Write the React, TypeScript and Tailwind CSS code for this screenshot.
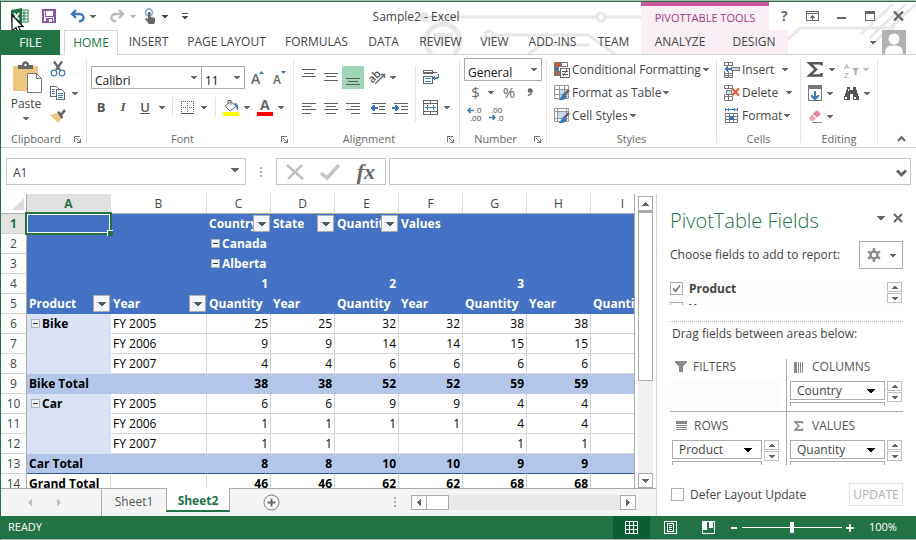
import React from "react";

type Kids = { children?: React.ReactNode };

function Svg({ w, h, children, className = "", smooth = false }: Kids & { w: number; h: number; className?: string; smooth?: boolean }) {
  return (
    <svg
      width={w}
      height={h}
      viewBox={`0 0 ${w} ${h}`}
      className={`shrink-0 overflow-visible ${className}`}
      fill="none"
      shapeRendering={smooth ? "auto" : "crispEdges"}
      aria-hidden="true"
    >
      {children}
    </svg>
  );
}

function Caret({ className = "text-[#666666]" }: { className?: string }) {
  return (
    <Svg w={6} h={3} className={className}>
      <path d="M0 0h6v1h-1v1h-1v1h-2v-1h-1v-1h-1z" fill="currentColor" />
    </Svg>
  );
}

function BigCaret({ className = "text-[#666666]" }: { className?: string }) {
  return (
    <Svg w={8} h={4} className={className}>
      <path d="M0 0h8v1h-1v1h-1v1h-1v1h-2v-1h-1v-1h-1v-1h-1z" fill="currentColor" />
    </Svg>
  );
}

function Lines({ rows, stroke = "#5f5f5f" }: { rows: [number, number, number][]; stroke?: string }) {
  return (
    <>
      {rows.map(([x, y, w]) => (
        <rect key={`${x}-${y}`} x={x} y={y} width={w} height={1} fill={stroke} />
      ))}
    </>
  );
}

function IconButton({ label, className = "", children }: Kids & { label: string; className?: string }) {
  return (
    <button type="button" aria-label={label} title={label} className={`flex shrink-0 items-center justify-center ${className}`}>
      {children}
    </button>
  );
}

function Launcher({ label }: { label: string }) {
  return (
    <IconButton label={label} className="h-4 w-3">
      <Svg w={7} h={7}>
        <path d="M0 0h6v1h-5v5h-1z" fill="#777" />
        <path d="M2 2h1v1h1v1h1v1h1v-2h1v4h-4v-1h2v-1h-1v-1h-1v-1h-1z" fill="#777" />
      </Svg>
    </IconButton>
  );
}

function Group({ name, width, launcher = false, children }: Kids & { name: string; width: string; launcher?: boolean }) {
  return (
    <section aria-label={name} className={`flex shrink-0 ${width}`}>
      <div className="flex min-w-0 flex-1 flex-col">
        <div className="h-[76px]">{children}</div>
        <div className={`flex h-4 items-center ${launcher ? "pr-[3px]" : ""}`}>
          <span className="flex-1 text-center text-[11px] leading-4 text-[#666666]">{name}</span>
          {launcher && <Launcher label={`${name} settings`} />}
        </div>
      </div>
      <div className="my-1 w-px bg-[#e1e1e1]" />
    </section>
  );
}

/* ---------- title bar ---------- */

function Circuit() {
  return (
    <Svg w={516} h={52} smooth className="pointer-events-none absolute right-0 top-0">
      <g stroke="#e8e8e8" strokeWidth={3}>
        <path d="M28 15H197M205 15H250L262 22V52" />
        <circle cx={201} cy={15} r={4} />
        <path d="M32 52A17 17 0 1 1 54 52" strokeWidth={5} />
        <circle cx={89} cy={33} r={4} />
        <path d="M93 33H188L215 52M128 52L142 43H190" />
        <path d="M241 15L268 52M258 45H282" />
        <path d="M373 52L400 26H495" />
        <path d="M452 52L506 2M462 52L516 2M440 52L493 2" />
      </g>
      <path d="M33 31h20v6h-5v6h-10v-6h-5z" fill="#e8e8e8" />
      <circle cx={24} cy={15} r={5} fill="#e8e8e8" />
      <rect x={395} y={32} width={74} height={20} fill="#fff" />
    </Svg>
  );
}

function ExcelLogo() {
  return (
    <Svg w={18} h={16} smooth>
      <rect x={9} y={2} width={8} height={12} fill="#fff" stroke="#217346" />
      <path d="M10 5h6M10 8h6M10 11h6M13 3v10" stroke="#217346" />
      <path d="M0 2L11 0V16L0 14z" fill="#217346" />
      <path d="M3 5L8 11.500M8 5L3 11.500" stroke="#fff" strokeWidth={1.800} />
    </Svg>
  );
}

function Cursor() {
  return (
    <Svg w={13} h={20} smooth className="pointer-events-none absolute left-[10px] top-[12px]">
      <path d="M1 1V17L5 13.500L7.500 19L10 18L7.500 12.500H12z" fill="#fff" stroke="#111" strokeWidth={1.200} />
    </Svg>
  );
}

function TitleBar() {
  return (
    <div className="relative flex h-7 items-stretch">
      <div className="flex w-[190px] shrink-0 items-center pl-[10px]">
        <ExcelLogo />
        <IconButton label="Save" className="ml-3 w-[15px]">
          <Svg w={14} h={14}>
            <path d="M1 1h12v12H1z" stroke="#8b55a5" strokeWidth={2} />
            <path d="M3 1h8v6H3zM4 9h6v4H4z" fill="#fff" stroke="#8b55a5" />
            <path d="M5 10h2v3H5z" fill="#8b55a5" />
          </Svg>
        </IconButton>
        <IconButton label="Undo" className="ml-[14px]">
          <Svg w={15} h={14} smooth>
            <path d="M6 1L2 5L6 9M2 5H9C15 5 15 12 9 12.500" stroke="#3f78b8" strokeWidth={2.400} />
          </Svg>
        </IconButton>
        <IconButton label="Undo list" className="ml-[5px]"><Caret /></IconButton>
        <IconButton label="Redo" className="ml-[14px]">
          <Svg w={15} h={14} smooth>
            <path d="M9 1L13 5L9 9M13 5H6C0 5 0 12 6 12.500" stroke="#b8b8b8" strokeWidth={2.400} />
          </Svg>
        </IconButton>
        <IconButton label="Redo list" className="ml-[5px]"><Caret className="text-[#c0c0c0]" /></IconButton>
        <IconButton label="Touch mode" className="ml-[8px]">
          <Svg w={12} h={16} smooth>
            <circle cx={5} cy={4.500} r={3.500} stroke="#8fb2d8" strokeWidth={1.800} />
            <path d="M4 4h2.500v5L11 10V14L10 16H5L1 11L2 10L4 11z" fill="#666" />
          </Svg>
        </IconButton>
        <IconButton label="Touch mode list" className="ml-[6px]"><Caret className="text-[#444444]" /></IconButton>
        <IconButton label="Customize toolbar" className="ml-[14px]">
          <Svg w={6} h={6}>
            <path d="M0 0h6v1H0zM0 3h6v1h-1v1h-1v1h-2v-1h-1v-1h-1z" fill="#555" />
          </Svg>
        </IconButton>
      </div>
      <h1 className="flex flex-1 items-center justify-center pt-px text-[12px] text-[#444444]">Sample2 - Excel</h1>
      <div className="flex w-32 shrink-0 items-center justify-center border-t-4 border-[#c9579b] bg-[#fbeff6] text-[11px] text-[#a23d80]">
        PIVOTTABLE TOOLS
      </div>
      <div className="flex w-[147px] shrink-0 items-center justify-between pl-3 pr-3">
        <IconButton label="Help"><span className="text-[14px] font-bold leading-4 text-[#666666]">?</span></IconButton>
        <IconButton label="Ribbon display options">
          <Svg w={13} h={10}>
            <path d="M0.500 0.500h12v9h-12zM0 2.500h13M6.500 4v5M4 6.500h5M5 5.500h3" stroke="#666" />
          </Svg>
        </IconButton>
        <IconButton label="Minimize"><Svg w={9} h={10}><rect y={6} width={9} height={2} fill="#666" /></Svg></IconButton>
        <IconButton label="Maximize">
          <Svg w={10} h={10}><path d="M0.500 0.500h9v9h-9z" stroke="#666" /><rect width={10} height={3} fill="#666" /></Svg>
        </IconButton>
        <IconButton label="Close">
          <Svg w={11} h={10} smooth><path d="M1 0.500L10 9.500M10 0.500L1 9.500" stroke="#666" strokeWidth={2.400} /></Svg>
        </IconButton>
      </div>
      <Cursor />
    </div>
  );
}

const TABS: [string, string][] = [
  ["INSERT", "w-[60px]"],
  ["PAGE LAYOUT", "w-[96px]"],
  ["FORMULAS", "w-[84px]"],
  ["DATA", "w-[50px]"],
  ["REVIEW", "w-16"],
  ["VIEW", "w-11"],
  ["ADD-INS", "w-[72px]"],
  ["TEAM", "w-[50px]"],
];

function RibbonTabs() {
  return (
    <nav className="relative flex h-[25px] border-b border-[#d4d4d4] text-[12px] text-[#444444]">
      <button type="button" className="h-[25px] w-[59px] shrink-0 bg-[#217346] text-white">FILE</button>
      <button type="button" className="ml-1 h-[25px] w-[54px] shrink-0 border border-b-0 border-[#d4d4d4] bg-white text-[#217346]">HOME</button>
      {TABS.map(([t, w]) => (
        <button key={t} type="button" className={`shrink-0 whitespace-nowrap pl-px ${w}`}>{t}</button>
      ))}
      <div className="flex-1" />
      <div className="flex shrink-0 bg-[#fbeff6]">
        <button type="button" className="w-[78px]">ANALYZE</button>
        <button type="button" className="w-[69px] pl-px">DESIGN</button>
      </div>
      <div className="flex w-[128px] shrink-0 items-center justify-end gap-[6px] pr-[10px]">
        <IconButton label="Account list"><Caret /></IconButton>
        <IconButton label="Account">
          <Svg w={24} h={24} smooth>
            <rect width={24} height={24} fill="#b2b2b2" />
            <circle cx={12} cy={9} r={5.500} fill="#fff" />
            <path d="M3 24C3 16 8 15.500 12 15.500S21 16 21 24z" fill="#fff" />
          </Svg>
        </IconButton>
      </div>
    </nav>
  );
}

/* ---------- ribbon ---------- */

function Combo({ label, value, className }: { label: string; value: string; className: string }) {
  return (
    <div className={`relative border border-[#ababab] bg-white ${className}`}>
      <select aria-label={label} defaultValue={value} className="h-full w-full appearance-none bg-transparent pb-1 pl-[3px] text-[12px] leading-4 text-[#111111] outline-none">
        <option>{value}</option>
      </select>
      <div className="pointer-events-none absolute inset-y-0 right-1 flex items-center"><Caret /></div>
    </div>
  );
}

function ClipboardGroup() {
  return (
    <Group name="Clipboard" width="w-[86px]" launcher>
      <div className="flex pt-[6px]">
        <button type="button" className="ml-[5px] flex w-10 flex-col items-center text-[12px] leading-4 text-[#444444]">
          <Svg w={30} h={32} smooth className="ml-1">
            <rect x={0} y={5} width={25} height={25} rx={1} fill="#ecc57f" />
            <path d="M5 4h4c0-5 7-5 7 0h4v4H5z" fill="#666" />
            <circle cx={12.500} cy={4} r={1.200} fill="#fff" />
            <path d="M14.500 12.500h9l5 5v14h-14z" fill="#fff" stroke="#777" />
            <path d="M23.500 12.500v5h5" stroke="#777" />
          </Svg>
          <span className="mb-[5px] mt-[3px]">Paste</span>
          <Caret />
        </button>
        <div className="ml-1 flex flex-col items-start gap-[9px]">
          <IconButton label="Cut">
            <Svg w={16} h={16} smooth>
              <path d="M4 0.500L10 9M12 0.500L6 9" stroke="#666" strokeWidth={2.200} />
              <circle cx={4} cy={12} r={2.800} stroke="#3f78b8" strokeWidth={1.200} />
              <circle cx={12} cy={12} r={2.800} stroke="#3f78b8" strokeWidth={1.200} />
            </Svg>
          </IconButton>
          <div className="flex items-center gap-[6px]">
            <IconButton label="Copy">
              <Svg w={16} h={14}>
                <path d="M0.500 0.500h6l3 3v7h-9z" fill="#fff" stroke="#666" />
                <path d="M6.500 3.500h5l3 3v7h-8z" fill="#fff" stroke="#666" />
                <path d="M2 3.500h3M2 5.500h3M2 7.500h3M8 7.500h5M8 9.500h5M8 11.500h5" stroke="#3f78b8" />
              </Svg>
            </IconButton>
            <Caret />
          </div>
          <IconButton label="Format painter">
            <Svg w={16} h={14} smooth>
              <path d="M0 6L7 4L12 9L8 14z" fill="#ecc57f" />
              <path d="M7 3L9 2L11 4L14 0L16 2L12.500 6L13 9L11 9.500z" fill="#666" />
            </Svg>
          </IconButton>
        </div>
      </div>
    </Group>
  );
}

function VRule({ className = "h-5" }: { className?: string }) {
  return <div className={`w-px shrink-0 bg-[#e1e1e1] ${className}`} />;
}

function FontGroup() {
  return (
    <Group name="Font" width="w-[207px]" launcher>
      <div className="flex items-center pl-1 pt-[11px]">
        <Combo label="Font name" value="Calibri" className="h-[23px] w-[111px]" />
        <Combo label="Font size" value="11" className="-ml-px h-[23px] w-11" />
        <IconButton label="Grow font" className="ml-[6px]">
          <Svg w={14} h={14} smooth>
            <text x={0} y={13} fontSize={14} fontWeight={600} fill="#666">A</text>
            <path d="M8 3L10.500 0L13 3z" fill="#3f78b8" />
          </Svg>
        </IconButton>
        <IconButton label="Shrink font" className="ml-[8px]">
          <Svg w={14} h={14} smooth>
            <text x={0} y={13} fontSize={12} fontWeight={600} fill="#666">A</text>
            <path d="M8 0H13L10.500 3z" fill="#3f78b8" />
          </Svg>
        </IconButton>
      </div>
      <div className="mt-[7px] flex h-[22px] items-center pl-[3px] text-[13px] leading-5 text-[#555555]">
        <button type="button" aria-label="Bold" className="w-[22px] text-center font-bold">B</button>
        <button type="button" aria-label="Italic" className="w-[22px] text-center font-['Liberation_Serif',serif] font-bold italic">I</button>
        <button type="button" aria-label="Underline" className="w-[22px] text-center font-semibold underline">U</button>
        <IconButton label="Underline list" className="ml-[3px]"><Caret /></IconButton>
        <VRule className="ml-[7px] h-5" />
        <IconButton label="Borders" className="ml-2">
          <Svg w={13} h={13}>
            <path d="M0.500 0v12M6.500 0v12M12.500 0v12M0 0.500h13M0 6.500h13" stroke="#666" strokeDasharray="1 1" />
            <path d="M0 12.500h13" stroke="#555" />
          </Svg>
        </IconButton>
        <IconButton label="Borders list" className="ml-[7px]"><Caret /></IconButton>
        <VRule className="ml-2 h-5" />
        <IconButton label="Fill colour" className="ml-[7px]">
          <Svg w={16} h={17} smooth>
            <path d="M2 7L8 2.500L13 7.500L7 12z" fill="#fff" stroke="#666" />
            <path d="M5 5V1.500H8V6" stroke="#666" />
            <path d="M11 4C15 4 16 7 14.500 12L13 8z" fill="#3f78b8" />
            <rect y={13} width={16} height={4} fill="#ffff00" />
          </Svg>
        </IconButton>
        <IconButton label="Fill colour list" className="ml-[5px]"><Caret /></IconButton>
        <IconButton label="Font colour" className="ml-[7px]">
          <Svg w={16} h={17} smooth>
            <text x={3} y={11} fontSize={14} fontWeight={700} fill="#666">A</text>
            <rect y={13} width={16} height={4} fill="#ff0000" />
          </Svg>
        </IconButton>
        <IconButton label="Font colour list" className="ml-[5px]"><Caret /></IconButton>
      </div>
    </Group>
  );
}

function AlignmentGroup() {
  return (
    <Group name="Alignment" width="w-[166px]" launcher>
      <div className="flex pt-[11px]">
        <div className="flex w-[121px] flex-col gap-2 pl-1">
          <div className="flex h-[23px] items-center">
            <IconButton label="Top align" className="h-[23px] w-[22px]">
              <Svg w={14} h={23}><Lines rows={[[0, 3, 14], [2, 7, 10], [0, 10, 14]]} /></Svg>
            </IconButton>
            <IconButton label="Middle align" className="h-[23px] w-[22px]">
              <Svg w={14} h={23}><Lines rows={[[0, 7, 14], [2, 10, 10], [0, 14, 14]]} /></Svg>
            </IconButton>
            <IconButton label="Bottom align" className="h-[23px] w-[22px] bg-[#9fd5b7]">
              <Svg w={14} h={23}><Lines rows={[[0, 12, 14], [2, 15, 10], [0, 18, 14]]} /></Svg>
            </IconButton>
            <IconButton label="Orientation" className="ml-[5px]">
              <Svg w={17} h={17} smooth>
                <text x={0} y={11} fontSize={11} fontWeight={600} fill="#555" transform="rotate(-45 6 9)">ab</text>
                <path d="M6 15L15 6M12 5.500H15.500V9" stroke="#666" strokeWidth={1.300} />
              </Svg>
            </IconButton>
            <IconButton label="Orientation list" className="ml-1"><Caret /></IconButton>
          </div>
          <div className="flex h-[22px] items-center">
            <IconButton label="Align left" className="w-[22px]">
              <Svg w={14} h={11}><Lines rows={[[0, 0, 14], [0, 3, 9], [0, 6, 14], [0, 10, 9]]} /></Svg>
            </IconButton>
            <IconButton label="Center" className="w-[22px]">
              <Svg w={14} h={11}><Lines rows={[[0, 0, 14], [2, 3, 10], [0, 6, 14], [2, 10, 10]]} /></Svg>
            </IconButton>
            <IconButton label="Align right" className="w-[22px]">
              <Svg w={14} h={11}><Lines rows={[[0, 0, 14], [5, 3, 9], [0, 6, 14], [5, 10, 9]]} /></Svg>
            </IconButton>
            <IconButton label="Decrease indent" className="ml-[6px]">
              <Svg w={16} h={11}>
                <Lines rows={[[2, 0, 14], [9, 3, 6], [9, 6, 6], [2, 10, 14]]} />
                <path d="M0 5h1v-1h1v-1h1v-1h2v2h3v2h-3v2h-2v-1h-1v-1h-1v-1h-1z" fill="#3f78b8" />
              </Svg>
            </IconButton>
            <IconButton label="Increase indent" className="ml-[6px]">
              <Svg w={16} h={11}>
                <Lines rows={[[2, 0, 14], [9, 3, 7], [9, 6, 7], [2, 10, 14]]} />
                <path d="M8 5h-1v-1h-1v-1h-1v-1h-2v2h-3v2h3v2h2v-1h1v-1h1v-1h1z" fill="#3f78b8" />
              </Svg>
            </IconButton>
          </div>
        </div>
        <VRule className="h-14" />
        <div className="flex flex-col gap-[15px] pl-[7px] pt-[3px]">
          <IconButton label="Wrap text" className="w-4">
            <Svg w={16} h={16}>
              <path d="M0.500 1.500h9v3h-9zM0.500 7.500h9v7h-9z" stroke="#666" />
              <path d="M0 3.500h14" stroke="#666" />
              <path d="M2 9.500h6M2 12.500h6" stroke="#3f78b8" />
              <path d="M15 5v3h-2v1h-1v-2h-1v1h-1v2h1v1h1v-1h3v-1h1v-4z" fill="#3f78b8" />
            </Svg>
          </IconButton>
          <div className="flex items-center gap-[6px]">
            <IconButton label="Merge and center">
              <Svg w={15} h={15}>
                <path d="M0.500 0.500h14v14h-14zM0 3.500h15M0 11.500h15M7.500 0v4M7.500 11v4" stroke="#666" />
                <path d="M2 7.500h11M4.500 5v5M10.500 5v5" stroke="#3f78b8" />
              </Svg>
            </IconButton>
            <Caret />
          </div>
        </div>
      </div>
    </Group>
  );
}

function NumberGroup() {
  return (
    <Group name="Number" width="w-[87px]" launcher>
      <div className="pl-1 pt-[3px]">
        <Combo label="Number format" value="General" className="h-[23px] w-[78px]" />
        <div className="mt-px flex h-5 items-center text-[15px] text-[#666666]">
          <button type="button" aria-label="Currency" className="ml-[6px] w-[11px] leading-5">$</button>
          <IconButton label="Currency list" className="ml-[7px]"><Caret /></IconButton>
          <button type="button" aria-label="Percent" className="ml-[7px] w-4 leading-5">%</button>
          <IconButton label="Comma style" className="ml-[10px]">
            <Svg w={6} h={8} smooth>
              <circle cx={3} cy={2.500} r={2.300} fill="#666" />
              <path d="M5 2C5.500 5 4 7 1 7.500" stroke="#666" strokeWidth={1.300} />
            </Svg>
          </IconButton>
        </div>
        <div className="flex gap-[6px] pl-[3px] pt-1">
          <IconButton label="Increase decimal">
            <Svg w={16} h={16} smooth>
              <text x={8} y={7} fontSize={8} fill="#444">.0</text>
              <text x={3} y={15} fontSize={8} fill="#444">.00</text>
              <path d="M7 4.500H1M3.500 2L1 4.500L3.500 7" stroke="#3f78b8" strokeWidth={1.500} />
            </Svg>
          </IconButton>
          <IconButton label="Decrease decimal">
            <Svg w={16} h={16} smooth>
              <text x={2} y={7} fontSize={8} fill="#444">.00</text>
              <text x={8} y={15} fontSize={8} fill="#444">.0</text>
              <path d="M0 11.500H6M3.500 9L6 11.500L3.500 14" stroke="#3f78b8" strokeWidth={1.500} />
            </Svg>
          </IconButton>
        </div>
      </div>
    </Group>
  );
}

function RibbonItem({ icon, text, wide = "gap-[2px]" }: { icon: React.ReactNode; text: string; wide?: string }) {
  return (
    <button type="button" className={`flex h-[23px] items-center whitespace-nowrap text-[12px] text-[#444444] ${wide}`}>
      {icon}
      <span>{text}</span>
      <Caret />
    </button>
  );
}

function TableBrush() {
  return (
    <>
      <path d="M15 5L10 10" stroke="#666" strokeWidth={2.500} />
      <path d="M10 8.500L13 11.500C12 15 8 15.500 4 15C7 14 7 10 10 8.500z" fill="#3f78b8" />
    </>
  );
}

function StylesGroup() {
  return (
    <Group name="Styles" width="w-[170px]">
      <div className="flex flex-col pl-[7px] pt-[3px]">
        <RibbonItem
          text="Conditional Formatting"
          icon={
            <Svg w={16} h={16}>
              <path d="M0 0h7v4H0zM0 10h4v4H0z" fill="#d9532c" />
              <path d="M0 5h5v4H0z" fill="#3f78b8" />
              <path d="M0.500 0.500h13v4h-13zM0.500 9.500h5v4h-5zM7.500 0v4M4.500 5v9M0.500 0v14" stroke="#777" />
              <path d="M6.500 6.500h9v9h-9z" fill="#fff" stroke="#666" />
              <path d="M8 9.500h6M8 12.500h6M12.500 7.500l-3 7" stroke="#555" />
            </Svg>
          }
        />
        <RibbonItem
          text="Format as Table"
          icon={
            <Svg w={16} h={16} smooth>
              <rect x={5} y={5} width={10} height={9} fill="#c7dbef" />
              <path d="M0.500 0.500h14v13h-14zM0 4.500h15M0 9.500h15M5.500 0v14M10.500 0v14" stroke="#999" />
              <TableBrush />
            </Svg>
          }
        />
        <RibbonItem
          text="Cell Styles"
          icon={
            <Svg w={16} h={16} smooth>
              <rect x={4} y={4} width={8} height={6} fill="#c7dbef" />
              <path d="M0.500 0.500h14v13h-14zM0 3.500h15M3.500 0v14M12.500 0v14M0 10.500h15" stroke="#999" />
              <TableBrush />
            </Svg>
          }
        />
      </div>
    </Group>
  );
}

function CellsGroup() {
  return (
    <Group name="Cells" width="w-[84px]">
      <div className="flex flex-col items-start pl-[7px] pt-[3px]">
        <RibbonItem
          text="Insert"
          wide="gap-[2px] [&>svg:last-child]:ml-[6px]"
          icon={
            <Svg w={16} h={16}>
              <path d="M0.500 0.500h8v3h-8zM4.500 0v4M0.500 11.500h8v4h-8zM4.500 9v7M0.500 9v4h8v-4" stroke="#777" />
              <path d="M7.500 5.500h8v3h-8z" fill="#c7dbef" stroke="#777" />
              <path d="M0 7h1v-1h1v-1h1v-1h1v2h3v2H4v2H3v-1H2V8H1V7z" fill="#3f78b8" />
            </Svg>
          }
        />
        <RibbonItem
          text="Delete"
          wide="gap-[2px] [&>svg:last-child]:ml-[6px]"
          icon={
            <Svg w={16} h={16} smooth>
              <path d="M0.500 0.500h8v3h-8zM4.500 0v4M0.500 11.500h8v4h-8zM4.500 9v7M0.500 9v4" stroke="#777" />
              <path d="M2.500 5.500h5v4h-5z" fill="#c7dbef" stroke="#777" />
              <path d="M8 3.500L15 10.500M15 3.500L8 10.500" stroke="#d9532c" strokeWidth={1.800} />
            </Svg>
          }
        />
        <RibbonItem
          text="Format"
          icon={
            <Svg w={16} h={16}>
              <path d="M1.500 0v3M13.500 0v3M2 1.500h11M4.500 0v3M10.500 0v3" stroke="#3f78b8" />
              <path d="M1.500 5.500h12v9h-12zM1 8.500h13M1 11.500h13M5.500 5v10M9.500 5v10" stroke="#777" />
              <rect x={5} y={8} width={5} height={4} fill="#3f78b8" />
            </Svg>
          }
        />
      </div>
    </Group>
  );
}

function EditingGroup() {
  return (
    <Group name="Editing" width="w-[77px]">
      <div className="flex flex-col gap-2 pl-[7px] pt-[7px]">
        <div className="flex h-[15px] items-center">
          <IconButton label="AutoSum">
            <Svg w={15} h={15} smooth>
              <path d="M13.500 3.500V1.200H1.500L8 7.500L1.500 13.500H13.500V11" stroke="#555" strokeWidth={2.500} />
            </Svg>
          </IconButton>
          <IconButton label="AutoSum list" className="ml-[6px]"><Caret /></IconButton>
          <IconButton label="Sort and filter" className="ml-[9px]">
            <Svg w={16} h={16} smooth>
              <text x={0} y={7} fontSize={8} fill="#999">A</text>
              <text x={0} y={16} fontSize={8} fill="#999">Z</text>
              <path d="M8 6h7l-2.500 3v4h-2v-4z" fill="#b0b0b0" />
            </Svg>
          </IconButton>
          <IconButton label="Sort list" className="ml-[3px]"><Caret className="text-[#c0c0c0]" /></IconButton>
        </div>
        <div className="flex h-4 items-center">
          <IconButton label="Fill">
            <Svg w={14} h={16}>
              <path d="M0.500 0.500h13v15h-13z" stroke="#777" />
              <rect width={14} height={4} fill="#777" />
              <path d="M6 6h2v5h1v-1h2v2h-1v1h-1v1h-1v1h-2v-1h-1v-1h-1v-1h-1v-2h2v1h1z" fill="#3f78b8" />
            </Svg>
          </IconButton>
          <IconButton label="Fill list" className="ml-[5px]"><Caret /></IconButton>
          <IconButton label="Find" className="ml-[11px]">
            <Svg w={15} h={13}>
              <path d="M3 0h3v3h3V0h3v3h1v3h1v3h1v4H9V7H6v6H0V9h1V6h1V3h1z" fill="#555" />
              <path d="M1 10h2v2H1zM10 10h2v2h-2zM4 2h1v2H4z" fill="#fff" />
            </Svg>
          </IconButton>
          <IconButton label="Find list" className="ml-[5px]"><Caret /></IconButton>
        </div>
        <div className="flex h-[14px] items-center">
          <IconButton label="Clear">
            <Svg w={14} h={13} smooth>
              <path d="M9 0L13 4L9 7.500L4.500 4z" fill="#e78a9c" />
              <path d="M4 4.500L8 8.500L5 11H3L1 8z" fill="#ef9fae" />
              <path d="M4 12.500H14" stroke="#888" />
            </Svg>
          </IconButton>
          <IconButton label="Clear list" className="ml-[5px]"><Caret /></IconButton>
        </div>
      </div>
    </Group>
  );
}

function Ribbon() {
  return (
    <div className="flex h-[93px] shrink-0 border-b border-[#d4d4d4]">
      <ClipboardGroup />
      <FontGroup />
      <AlignmentGroup />
      <NumberGroup />
      <StylesGroup />
      <CellsGroup />
      <EditingGroup />
      <div className="flex flex-1 items-end justify-end pb-1 pr-[10px]">
        <IconButton label="Collapse ribbon">
          <Svg w={9} h={9} smooth><path d="M1 7L4.500 3L8 7" stroke="#666" strokeWidth={2} /></Svg>
        </IconButton>
      </div>
    </div>
  );
}

function FormulaBar() {
  return (
    <div className="mb-[9px] mt-[10px] flex h-[27px] shrink-0 pl-[5px]">
      <div className="relative w-60 border border-[#c6c6c6]">
        <input aria-label="Name box" defaultValue="A1" className="h-full w-full pb-[2px] pl-[6px] text-[12px] text-[#444444] outline-none" />
        <div className="pointer-events-none absolute inset-y-0 right-[6px] flex items-center pb-[3px]"><BigCaret /></div>
      </div>
      <div className="flex w-[30px] items-center justify-center">
        <Svg w={2} h={12}><path d="M0 1h2v2H0zM0 5h2v2H0zM0 9h2v2H0z" fill="#b0b0b0" /></Svg>
      </div>
      <div className="flex w-[110px] items-center justify-between border border-[#c6c6c6] pl-[9px] pr-[10px]">
        <IconButton label="Cancel">
          <Svg w={18} h={16} smooth><path d="M1 1L17 15M16 1L2 15" stroke="#bdbdbd" strokeWidth={2.400} /></Svg>
        </IconButton>
        <IconButton label="Enter">
          <Svg w={20} h={16} smooth><path d="M1 9L7 14L19 1" stroke="#c4c4c4" strokeWidth={3.500} /></Svg>
        </IconButton>
        <IconButton label="Insert function">
          <span className="font-['Liberation_Serif',serif] text-[22px] font-bold italic leading-6 text-[#666666]">fx</span>
        </IconButton>
      </div>
      <div className="relative ml-[3px] mr-[5px] flex-1 border border-[#c6c6c6]">
        <input aria-label="Formula" className="h-full w-full px-1 text-[12px] outline-none" />
        <div className="pointer-events-none absolute inset-y-0 right-[3px] flex items-center pt-[2px]">
          <Svg w={11} h={8} smooth><path d="M1 1.500L5.500 6L10 1.500" stroke="#666" strokeWidth={3} /></Svg>
        </div>
      </div>
    </div>
  );
}

/* ---------- grid ---------- */

function FilterButton({ label }: { label: string }) {
  return (
    <button type="button" aria-label={label} className="absolute bottom-px right-0 flex h-[17px] w-[17px] items-center justify-center border border-[#ababab] bg-[#f5f7fa]">
      <BigCaret className="text-[#555555]" />
    </button>
  );
}

function Collapse() {
  return (
    <Svg w={9} h={9}>
      <path d="M0.500 0.500h8v8h-8z" fill="#eef1f6" stroke="#a9b1bd" />
      <path d="M2 4.500h5" stroke="#333" />
    </Svg>
  );
}

type Cell = { t?: string; filter?: boolean; box?: boolean };
type Row = { kind: "head" | "data" | "total" | "grand"; cells: (string | Cell)[] };

const ROWS: Row[] = [
  { kind: "head", cells: ["", "", { t: "Country", filter: true }, { t: "State", filter: true }, { t: "Quantity", filter: true }, "Values", "", "", ""] },
  { kind: "head", cells: ["", "", { t: "Canada", box: true }, "", "", "", "", "", ""] },
  { kind: "head", cells: ["", "", { t: "Alberta", box: true }, "", "", "", "", "", ""] },
  { kind: "head", cells: ["", "", "1", "", "2", "", "3", "", ""] },
  { kind: "head", cells: [{ t: "Product", filter: true }, { t: "Year", filter: true }, "Quantity", "Year", "Quantity", "Year", "Quantity", "Year", "Quantity"] },
  { kind: "data", cells: [{ t: "Bike", box: true }, "FY 2005", "25", "25", "32", "32", "38", "38", ""] },
  { kind: "data", cells: ["", "FY 2006", "9", "9", "14", "14", "15", "15", ""] },
  { kind: "data", cells: ["", "FY 2007", "4", "4", "6", "6", "6", "6", ""] },
  { kind: "total", cells: ["Bike Total", "", "38", "38", "52", "52", "59", "59", ""] },
  { kind: "data", cells: [{ t: "Car", box: true }, "FY 2005", "6", "6", "9", "9", "4", "4", ""] },
  { kind: "data", cells: ["", "FY 2006", "1", "1", "1", "1", "4", "4", ""] },
  { kind: "data", cells: ["", "FY 2007", "1", "1", "", "", "1", "1", ""] },
  { kind: "total", cells: ["Car Total", "", "8", "8", "10", "10", "9", "9", ""] },
  { kind: "grand", cells: ["Grand Total", "", "46", "46", "62", "62", "68", "68", ""] },
];

function cellStyle(kind: Row["kind"], col: number, row: number) {
  if (kind === "head") return "bg-[#4472c4] border-[#4472c4] text-white font-bold";
  if (kind === "total") return `bg-[#b4c6e7] font-bold ${row === 12 ? "border-r-[#b4c6e7] border-b-[#2f5597]" : "border-[#b4c6e7]"}`;
  if (kind === "data" && col === 0) return "bg-[#d9e1f2] border-[#d9e1f2] font-bold";
  return `bg-white border-[#d4d4d4] ${kind === "grand" ? "font-bold" : ""}`;
}

function Sheet() {
  return (
    <div className="min-h-0 min-w-0 flex-1 overflow-hidden border-r border-[#ababab]">
      <table className="w-[653px] table-fixed border-separate border-spacing-0 text-[12px] leading-[19px] text-black">
        <colgroup>
          <col className="w-[26px]" />
          <col className="w-[84px]" />
          <col className="w-24" />
          {"CDEFGHI".split("").map((c) => <col key={c} className="w-16" />)}
        </colgroup>
        <thead>
          <tr className="h-5">
            <th aria-label="Select all" className="border-b border-r border-[#ababab] p-0">
              <Svg w={12} h={12} className="ml-auto mr-[2px]" smooth><path d="M12 0V12H0z" fill="#dcdcdc" /></Svg>
            </th>
            {"ABCDEFGHI".split("").map((c) => (
              <th
                key={c}
                scope="col"
                className={`border-b border-r border-b-[#ababab] border-r-[#dcdcdc] p-0 ${c === "A" ? "bg-[#e1e1e1] font-bold text-[#217346]" : "font-normal text-[#444444]"}`}
              >
                {c}
              </th>
            ))}
          </tr>
        </thead>
        <tbody>
          {ROWS.map((row, r) => (
            <tr key={r} className="h-5">
              <th
                scope="row"
                className={`border-b border-r border-b-[#d4d4d4] border-r-[#ababab] p-0 ${r === 0 ? "bg-[#e1e1e1] font-bold text-[#217346]" : "font-normal text-[#444444]"}`}
              >
                {r + 1}
              </th>
              {row.cells.map((raw, c) => {
                const cell: Cell = typeof raw === "string" ? { t: raw } : raw;
                const right = /^\d+$/.test(cell.t ?? "");
                return (
                  <td key={c} className={`relative border-b border-r p-0 ${cellStyle(row.kind, c, r)}`}>
                    <div className={`flex h-[19px] items-center gap-[2px] whitespace-nowrap px-[2px] ${right ? "justify-end" : ""} ${cell.box ? "pl-1" : ""} ${cell.filter ? "overflow-hidden" : ""}`}>
                      {cell.box && <Collapse />}
                      {cell.t}
                    </div>
                    {cell.filter && <FilterButton label={`Filter ${cell.t}`} />}
                    {r === 0 && c === 0 && (
                      <div className="absolute -bottom-[2px] -left-[2px] -right-[2px] -top-[2px] z-10 border-2 border-[#217346]">
                        <div className="h-full border border-white" />
                        <div className="absolute -bottom-[3px] -right-[3px] h-[6px] w-[6px] border-l border-t border-white bg-[#217346]" />
                      </div>
                    )}
                  </td>
                );
              })}
            </tr>
          ))}
        </tbody>
      </table>
    </div>
  );
}

function Arrow({ dir, className = "text-[#666666]" }: { dir: "up" | "down" | "left" | "right"; className?: string }) {
  const vertical = dir === "up" || dir === "down";
  const d = {
    up: "M0 4h7v-1h-1v-1h-1v-1h-1v-1h-1v1h-1v1h-1v1h-1z",
    down: "M0 0h7v1h-1v1h-1v1h-1v1h-1v-1h-1v-1h-1v-1h-1z",
    left: "M4 0v7h-1v-1h-1v-1h-1v-1h-1v-1h1v-1h1v-1h1v-1z",
    right: "M0 0v7h1v-1h1v-1h1v-1h1v-1h-1v-1h-1v-1h-1v-1z",
  }[dir];
  return (
    <Svg w={vertical ? 7 : 4} h={vertical ? 4 : 7} className={className}>
      <path d={d} fill="currentColor" />
    </Svg>
  );
}

function VScroll() {
  return (
    <div className="ml-[3px] mr-[3px] mt-[2px] flex w-[15px] shrink-0 flex-col bg-[#f0f0f0]">
      <IconButton label="Scroll up" className="h-[15px] border border-[#ababab] bg-white"><Arrow dir="up" /></IconButton>
      <div className="h-[170px] border border-t-2 border-[#ababab] bg-white" />
      <div className="flex-1" />
      <IconButton label="Scroll down" className="h-[15px] border border-[#ababab] bg-white"><Arrow dir="down" /></IconButton>
    </div>
  );
}

function SheetTabs() {
  return (
    <div className="flex h-7 shrink-0 bg-[#f4f4f4] text-[12px] text-[#555555]">
      <div className="flex min-w-0 flex-1 border-t border-[#ababab] pr-5">
        <div className="flex w-[101px] items-center border-r border-[#ababab] pl-[27px]">
          <IconButton label="Previous sheet"><Arrow dir="left" className="text-[#c0c0c0]" /></IconButton>
          <IconButton label="Next sheet" className="ml-[25px]"><Arrow dir="right" className="text-[#c0c0c0]" /></IconButton>
        </div>
        <button type="button" className="w-[64px] pb-[2px]">Sheet1</button>
        <button type="button" className="-mt-px mb-1 w-16 border-b-2 border-l border-r border-l-[#ababab] border-r-[#ababab] border-b-[#217346] bg-white pt-[3px] font-bold text-[#217346]">
          Sheet2
        </button>
        <IconButton label="New sheet" className="ml-[33px]">
          <Svg w={17} h={17} smooth>
            <circle cx={8.500} cy={8.500} r={7.500} fill="#fff" stroke="#777" />
            <path d="M8.500 4.500v8M4.500 8.500h8" stroke="#666" strokeWidth={2} />
          </Svg>
        </IconButton>
        <div className="flex-1" />
        <div className="flex w-[32px] items-center">
          <Svg w={2} h={11} className="ml-[15px]"><path d="M0 0h2v2H0zM0 4h2v2H0zM0 8h2v2H0z" fill="#b0b0b0" /></Svg>
        </div>
        <div className="my-[6px] flex w-[225px] bg-[#e8e8e8]">
          <IconButton label="Scroll left" className="w-4 border border-[#ababab] bg-white"><Arrow dir="left" /></IconButton>
          <div className="-ml-px w-[23px] border border-[#ababab] bg-white" />
          <div className="flex-1" />
          <IconButton label="Scroll right" className="w-4 border border-[#ababab] bg-white"><Arrow dir="right" /></IconButton>
        </div>
      </div>
    </div>
  );
}

/* ---------- field pane ---------- */

function Tick({ id, checked = false }: { id: string; checked?: boolean }) {
  return (
    <span className="relative flex h-[13px] w-[13px] shrink-0">
      <input id={id} type="checkbox" defaultChecked={checked} className="peer h-[13px] w-[13px] appearance-none border border-[#ababab] bg-white" />
      <Svg w={13} h={13} smooth className="pointer-events-none absolute inset-0 opacity-0 peer-checked:opacity-100">
        <path d="M3 6.500L5.500 9.500L10 3.500" stroke="#777" strokeWidth={1.700} />
      </Svg>
    </span>
  );
}

function Spinner({ label }: { label: string }) {
  return (
    <div className="mr-px flex w-[15px] shrink-0 flex-col gap-px">
      <IconButton label={`${label} up`} className="h-[10px] border border-[#c0c0c0]">
        <Svg w={6} h={3}><path d="M0 3h6v-1h-1v-1h-1v-1h-2v1h-1v1h-1z" fill="#666" /></Svg>
      </IconButton>
      <IconButton label={`${label} down`} className="h-[10px] border border-[#c0c0c0]"><Caret /></IconButton>
    </div>
  );
}

function Area({ title, icon, field, className }: { title: string; icon: React.ReactNode; field?: string; className: string }) {
  return (
    <div className={`h-[53px] ${className}`}>
      <div className="flex h-[22px] items-start text-[12px] leading-4 text-[#555555]">
        <span className="flex h-4 w-[22px] items-center pl-1">{icon}</span>
        {title}
      </div>
      {field ? (
        <div className="flex gap-[2px]">
          <div className="h-[25px] min-w-0 flex-1 overflow-hidden">
            <div className="relative h-[19px] border border-[#ababab]">
              <select aria-label={`${title} field`} className="h-full w-full appearance-none bg-transparent pl-[6px] text-[12px] leading-4 text-[#444444] outline-none">
                <option>{field}</option>
              </select>
              <div className="pointer-events-none absolute inset-y-0 right-[9px] flex items-center"><BigCaret className="text-black" /></div>
            </div>
            <div className="mt-[2px] h-5 border border-[#ababab]" />
          </div>
          <Spinner label={title} />
        </div>
      ) : (
        <div className="h-[26px] bg-[#fcfcfc]" />
      )}
    </div>
  );
}

function FieldPane() {
  return (
    <aside className="flex w-[260px] shrink-0 flex-col border-l border-[#d4d4d4] pl-[13px] pr-[13px] text-[12px] text-[#444444]">
      <div className="flex h-[47px] items-center justify-between">
        <h2 className="pt-[7px] text-[20px] font-light leading-7 text-[#217346]">PivotTable Fields</h2>
        <div className="flex items-center gap-2">
          <IconButton label="Pane options"><BigCaret /></IconButton>
          <IconButton label="Close pane">
            <Svg w={10} h={10} smooth><path d="M1 1L9 9M9 1L1 9" stroke="#666" strokeWidth={2} /></Svg>
          </IconButton>
        </div>
      </div>
      <div className="flex h-7 items-center justify-between">
        <span className="whitespace-nowrap">Choose fields to add to report:</span>
        <button type="button" aria-label="Tools" className="flex h-7 w-11 items-center justify-center gap-[9px] border border-[#ababab]">
          <Svg w={14} h={14} smooth>
            <circle cx={7} cy={7} r={3.500} stroke="#8a8a8a" strokeWidth={2.500} />
            <path d="M7 0v3M7 11v3M1 3.500L3.500 5M10.500 9L13 10.500M1 10.500L3.500 9M10.500 5L13 3.500" stroke="#8a8a8a" strokeWidth={2.400} />
          </Svg>
          <Caret />
        </button>
      </div>
      <div className="mt-3 flex h-6 justify-between overflow-hidden bg-[#fcfcfc] pt-px">
        <ul>
          <li className="flex h-5 items-start gap-[6px] leading-[13px]"><Tick id="f-product" checked /><label htmlFor="f-product" className="font-bold">Product</label></li>
          <li className="flex h-5 items-start gap-[6px] leading-[13px]"><Tick id="f-year" checked /><label htmlFor="f-year" className="font-bold">Year</label></li>
        </ul>
        <Spinner label="Fields" />
      </div>
      <div className="mt-4 border-t border-dotted border-[#ababab]" />
      <p className="mt-1 pl-[2px] leading-4">Drag fields between areas below:</p>
      <div className="mt-[17px] grid grid-cols-[117px_minmax(0,1fr)]">
        <Area
          title="FILTERS"
          className="border-b border-r border-[#ababab] pl-px pr-[6px]"
          icon={<Svg w={12} h={12}><path d="M0 0h12v2h-1v1h-1v1h-1v1h-1v6h-4v-6h-1v-1h-1v-1h-1v-1h-1z" fill="#8a8a8a" /></Svg>}
        />
        <Area
          title="COLUMNS"
          field="Country"
          className="border-b border-[#ababab] pl-[3px]"
          icon={<Svg w={10} h={11}><path d="M0 0h3v11H0zM4 0h1v11H4zM6 0h1v11H6zM8 0h1v11H8z" fill="#8a8a8a" /></Svg>}
        />
        <Area
          title="ROWS"
          field="Product"
          className="border-r border-[#ababab] pl-[2px] pr-[6px] pt-[6px]"
          icon={<Svg w={11} h={10}><path d="M0 0h11v3H0zM0 4h11v1H0zM0 6h11v1H0zM0 8h11v1H0z" fill="#8a8a8a" /></Svg>}
        />
        <Area
          title="VALUES"
          field="Quantity"
          className="pl-[3px] pt-[6px]"
          icon={<Svg w={10} h={10} smooth><path d="M8.500 2.500V1H1L5 5L1 9H8.500V7.500" stroke="#777" strokeWidth={1.400} /></Svg>}
        />
      </div>
      <div className="mb-[10px] mt-auto flex items-center justify-between">
        <div className="flex items-center gap-[6px] pl-px"><Tick id="defer" /><label htmlFor="defer">Defer Layout Update</label></div>
        <button type="button" disabled className="h-[23px] w-[54px] border border-[#e1e1e1] text-[#b0b0b0]">UPDATE</button>
      </div>
    </aside>
  );
}

function StatusBar() {
  return (
    <footer className="flex h-[23px] shrink-0 items-center bg-[#217346] text-[11px] text-white">
      <span className="flex-1 pl-[7px]">READY</span>
      <IconButton label="Normal view" className="h-full w-[37px] bg-[#0b5f33]">
        <Svg w={13} h={13}><path d="M0.500 0.500h12v12h-12zM0 4.500h13M0 8.500h13M4.500 0v13M8.500 0v13" stroke="#fff" /></Svg>
      </IconButton>
      <IconButton label="Page layout view" className="h-full w-10">
        <Svg w={13} h={13}><path d="M0.500 0.500h12v12h-12zM3.500 2.500h6v8h-6zM5 4.500h3M5 6.500h3M5 8.500h3" stroke="#fff" /></Svg>
      </IconButton>
      <IconButton label="Page break view" className="h-full w-9">
        <Svg w={13} h={13}><path d="M0.500 0.500h12v12h-12z" stroke="#fff" /><path d="M1 1h4v8H1zM7 1h4v6H7z" fill="#fff" /></Svg>
      </IconButton>
      <IconButton label="Zoom out" className="ml-px w-[14px]"><Svg w={6} h={2}><rect width={6} height={2} fill="#fff" /></Svg></IconButton>
      <input
        type="range"
        aria-label="Zoom"
        defaultValue={50}
        className="mx-px h-[11px] w-[100px] appearance-none bg-[linear-gradient(#fff,#fff)] bg-[length:100%_1px] bg-center bg-no-repeat [&::-webkit-slider-thumb]:h-[11px] [&::-webkit-slider-thumb]:w-1 [&::-webkit-slider-thumb]:appearance-none [&::-webkit-slider-thumb]:bg-white"
      />
      <IconButton label="Zoom in" className="w-[14px]"><Svg w={8} h={8}><path d="M3 0h2v3h3v2H5v3H3V5H0V3h3z" fill="#fff" /></Svg></IconButton>
      <span className="w-[59px] pl-3">100%</span>
    </footer>
  );
}

export default function App() {
  return (
    <div className="flex h-screen flex-col overflow-hidden border-b border-l border-t border-b-[#b0b0b0] border-l-[#217346] border-t-[#b8b8b8] bg-white font-['Open_Sans','Noto_Sans',sans-serif]">
      <header className="relative shrink-0 border-t border-[#217346]">
        <Circuit />
        <TitleBar />
        <RibbonTabs />
      </header>
      <Ribbon />
      <FormulaBar />
      <main className="flex min-h-0 flex-1">
        <div className="flex min-w-0 flex-1 flex-col">
          <div className="flex min-h-0 flex-1">
            <Sheet />
            <VScroll />
          </div>
          <SheetTabs />
        </div>
        <FieldPane />
      </main>
      <StatusBar />
    </div>
  );
}
